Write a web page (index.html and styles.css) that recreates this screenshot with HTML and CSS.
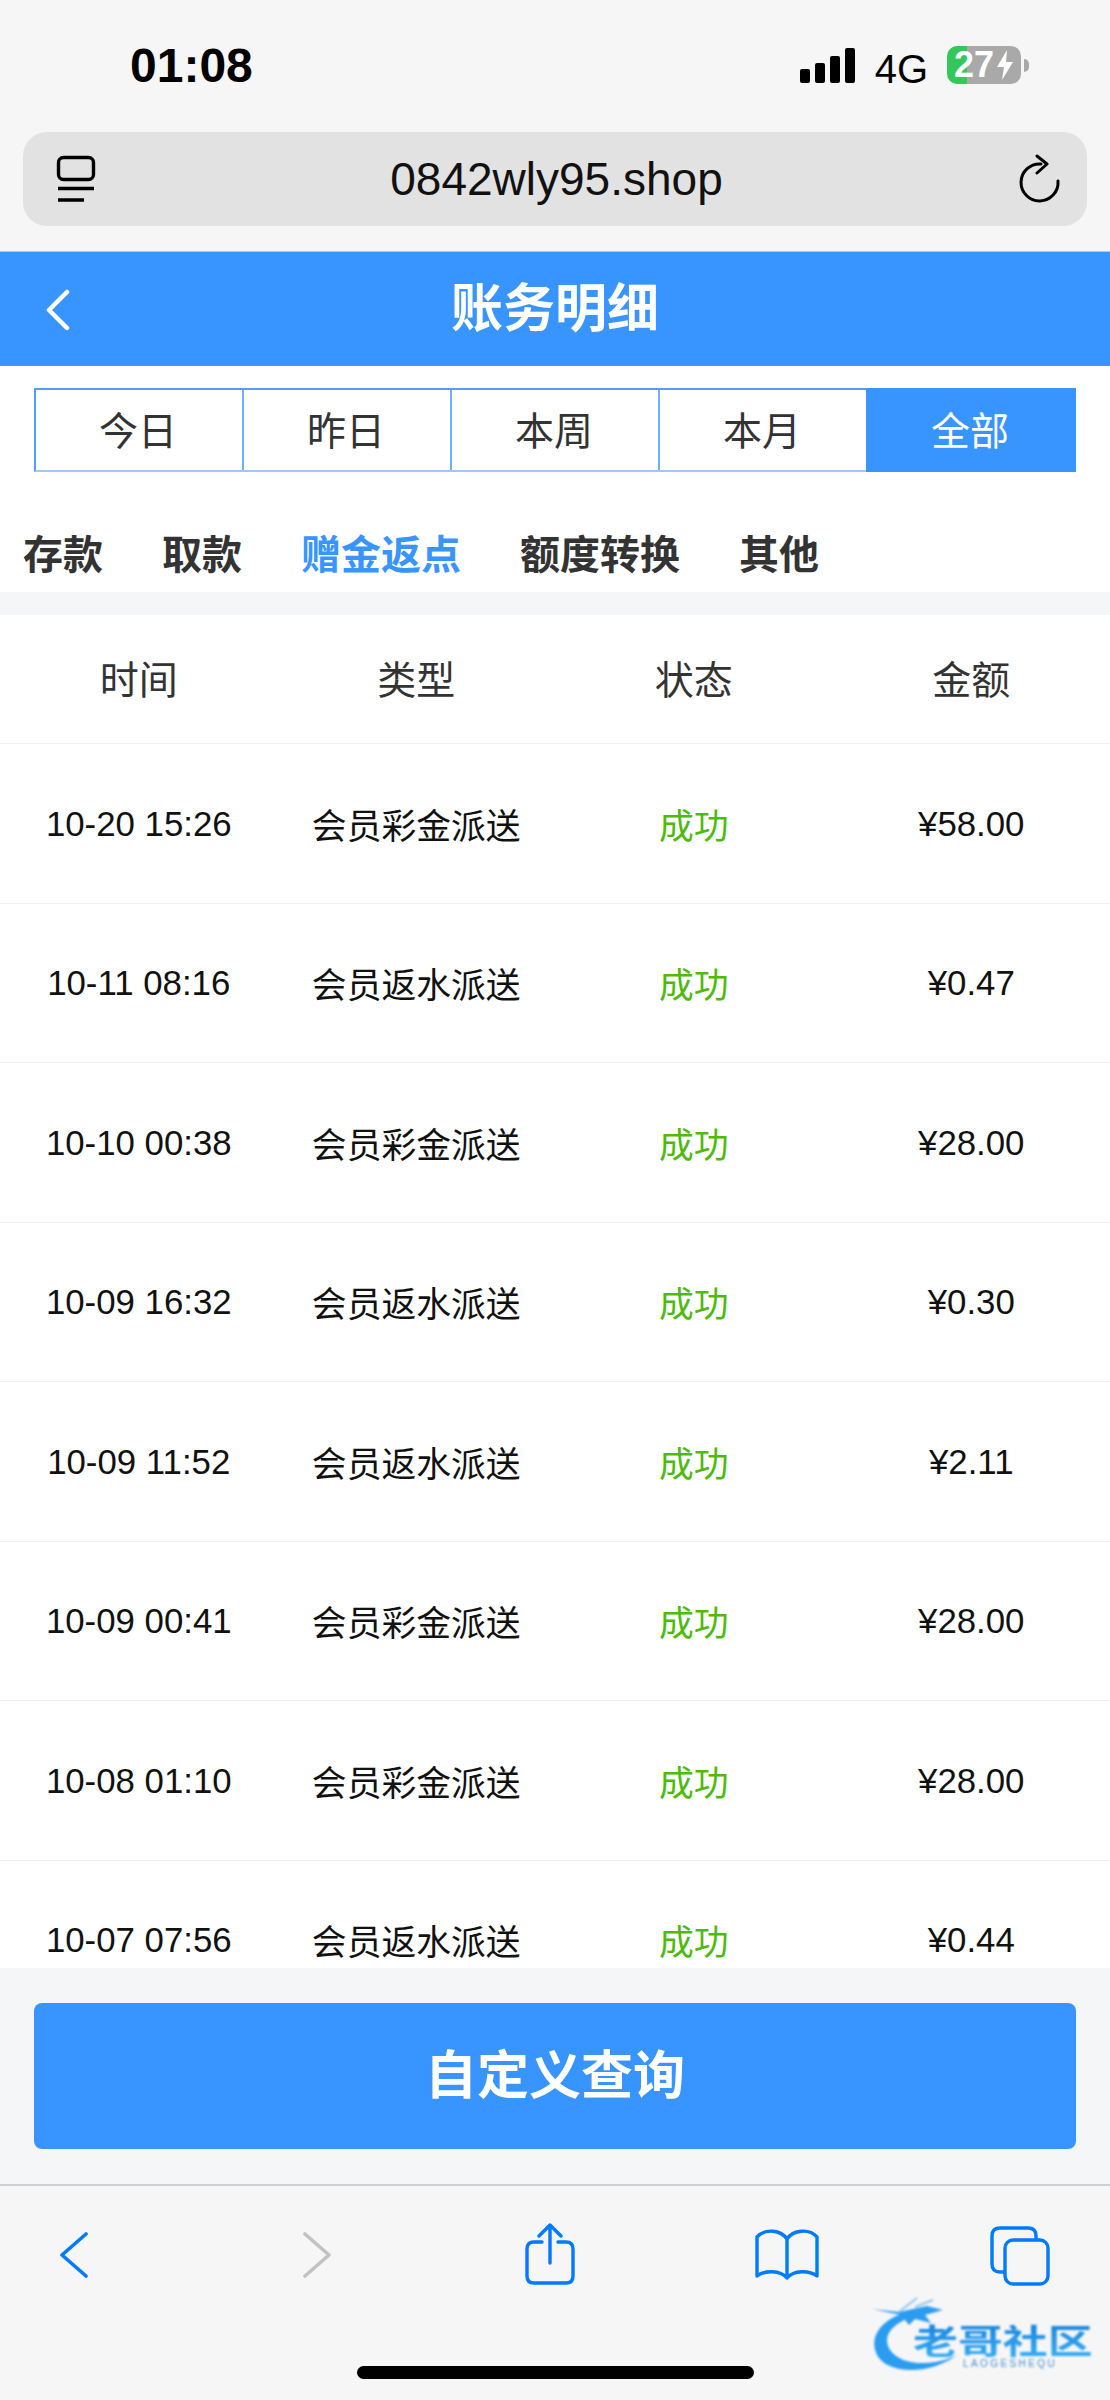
FILE: index.html
```html
<!DOCTYPE html>
<html lang="zh-CN">
<head>
    <meta charset="UTF-8">
    <meta name="viewport" content="width=device-width, initial-scale=1.0">
    <title>账务明细</title>
    <link rel="stylesheet" href="styles.css">
</head>
<body>
    <div class="browser-top">
        <div class="status-bar">
            <span class="clock">01:08</span>
            <div class="status-right">
                <div class="signal"><i class="bar1"></i><i class="bar2"></i><i class="bar3"></i><i class="bar4"></i></div>
                <span class="network">4G</span>
                <div class="battery">
                    <span class="battery-num">27</span>
                    <svg class="battery-bolt" width="18" height="30" viewBox="0 0 18 30"><path d="M11 0 L1 17 H8 L6 30 L17 12 H10 Z" fill="#fff"/></svg>
                </div>
                <i class="battery-nub"></i>
            </div>
        </div>
        <div class="url-bar">
            <svg class="url-icon" width="40" height="48" viewBox="0 0 40 48" fill="none" stroke="#000" stroke-width="3.4" stroke-linecap="round">
                <rect x="2.5" y="2.5" width="35" height="22" rx="5"/>
                <path d="M2 33.5 H38 M2 45 H28" stroke-linecap="butt"/>
            </svg>
            <span class="url-text">0842wly95.shop</span>
            <svg class="url-icon" width="42" height="50" viewBox="0 0 42 50" fill="none" stroke="#000" stroke-width="3" stroke-linecap="round" stroke-linejoin="round">
                <path d="M22 10 A18.5 18.5 0 1 0 39 27"/>
                <path d="M18 2 L28 10 L18 19"/>
            </svg>
        </div>
    </div>

    <header class="page-header">
        <svg class="back-arrow" width="26" height="42" viewBox="0 0 26 42" fill="none" stroke="#fff" stroke-width="4.5" stroke-linecap="round" stroke-linejoin="round"><path d="M22 3 L4 21 L22 39"/></svg>
        <h1>账务明细</h1>
    </header>

    <div class="range-tabs">
        <div class="range-tab">今日</div>
        <div class="range-tab">昨日</div>
        <div class="range-tab">本周</div>
        <div class="range-tab">本月</div>
        <div class="range-tab active">全部</div>
    </div>

    <nav class="type-tabs">
        <span>存款</span>
        <span>取款</span>
        <span class="active">赠金返点</span>
        <span>额度转换</span>
        <span>其他</span>
    </nav>

    <div class="list">
        <div class="row head">
            <div>时间</div><div>类型</div><div>状态</div><div>金额</div>
        </div>
        <div class="row">
            <div>10-20 15:26</div><div>会员彩金派送</div><div class="ok">成功</div><div>¥58.00</div>
        </div>
        <div class="row">
            <div>10-11 08:16</div><div>会员返水派送</div><div class="ok">成功</div><div>¥0.47</div>
        </div>
        <div class="row">
            <div>10-10 00:38</div><div>会员彩金派送</div><div class="ok">成功</div><div>¥28.00</div>
        </div>
        <div class="row">
            <div>10-09 16:32</div><div>会员返水派送</div><div class="ok">成功</div><div>¥0.30</div>
        </div>
        <div class="row">
            <div>10-09 11:52</div><div>会员返水派送</div><div class="ok">成功</div><div>¥2.11</div>
        </div>
        <div class="row">
            <div>10-09 00:41</div><div>会员彩金派送</div><div class="ok">成功</div><div>¥28.00</div>
        </div>
        <div class="row">
            <div>10-08 01:10</div><div>会员彩金派送</div><div class="ok">成功</div><div>¥28.00</div>
        </div>
        <div class="row">
            <div>10-07 07:56</div><div>会员返水派送</div><div class="ok">成功</div><div>¥0.44</div>
        </div>
    </div>

    <div class="query-bar">
        <button type="button" class="query-btn">自定义查询</button>
    </div>

    <div class="browser-bottom">
        <div class="toolbar">
            <svg class="tool-back" width="28" height="46" viewBox="0 0 28 46" fill="none" stroke="#007aff" stroke-width="3.6" stroke-linecap="round" stroke-linejoin="round"><path d="M26 2 L2 23 L26 44"/></svg>
            <svg class="tool-forward" width="28" height="46" viewBox="0 0 28 46" fill="none" stroke="#c2c2c2" stroke-width="3.6" stroke-linecap="round" stroke-linejoin="round"><path d="M2 2 L26 23 L2 44"/></svg>
            <svg class="tool-share" width="50" height="62" viewBox="0 0 50 62" fill="none" stroke="#007aff" stroke-width="3.4" stroke-linecap="round" stroke-linejoin="round">
                <path d="M25 2 V40 M14 13 L25 2 L36 13"/>
                <path d="M17 19 H9 Q2 19 2 26 V53 Q2 60 9 60 H41 Q48 60 48 53 V26 Q48 19 41 19 H33"/>
            </svg>
            <svg class="tool-book" width="64" height="52" viewBox="0 0 64 52" fill="none" stroke="#007aff" stroke-width="3.4" stroke-linecap="round" stroke-linejoin="round">
                <path d="M32 10 V49 M32 10 C26 1 10 -1 2 8 V47 C10 41 25 41 32 49 C39 41 54 41 62 47 V8 C54 -1 38 1 32 10 Z"/>
            </svg>
            <svg class="tool-tabs" width="60" height="60" viewBox="0 0 60 60" fill="none" stroke="#007aff" stroke-width="3.4" stroke-linejoin="round">
                <path d="M46 14 V10 Q46 2 38 2 H10 Q2 2 2 10 V38 Q2 46 10 46 H15"/>
                <rect x="15" y="14" width="43" height="44" rx="8"/>
            </svg>
        </div>
        <div class="home-indicator"></div>
    </div>

    <div class="watermark">
        <svg width="110" height="90" viewBox="0 0 110 90">
            <path d="M36 19 C14 27 4 44 12 60 C21 78 62 82 92 60 C68 72 36 71 25 55 C17 42 26 30 44 23 Z" fill="#2a9df0"/>
            <path d="M7 14 L34 17 L62 11 L78 15 L60 20 L66 28 L50 24 L44 30 L36 20 Z" fill="#2a9df0"/>
            <path d="M34 17 L52 3 M50 12 L68 5" stroke="#8cc8f2" stroke-width="2" fill="none"/>
        </svg>
        <span class="wm-name">老哥社区</span>
        <span class="wm-sub">LAOGESHEQU</span>
    </div>
</body>
</html>
```

FILE: styles.css
```css
* {
    box-sizing: border-box;
}
html, body {
    margin: 0;
    padding: 0;
}
body {
    position: relative;
    width: 1110px;
    height: 2400px;
    overflow: hidden;
    display: flex;
    flex-direction: column;
    background-color: #ffffff;
    font-family: "Liberation Sans", "Noto Sans CJK SC", sans-serif;
    color: #333;
}

/* safari chrome, top */
.browser-top {
    height: 252px;
    flex-shrink: 0;
    background-color: #f6f6f6;
    border-bottom: 1px solid #c4c4c4;
    padding: 0 23px;
}
.status-bar {
    height: 132px;
    display: flex;
    justify-content: space-between;
    padding: 42px 0 0 107px;
}
.clock {
    font-size: 48px;
    font-weight: bold;
    line-height: 48px;
    color: #000;
}
.status-right {
    display: flex;
    align-items: flex-start;
    padding-right: 58px;
}
.signal {
    display: flex;
    align-items: flex-end;
    gap: 5px;
    height: 35px;
    margin-top: 6px;
}
.signal i {
    display: block;
    width: 10px;
    background-color: #000;
    border-radius: 2px;
}
.signal .bar1 { height: 14px; }
.signal .bar2 { height: 20px; }
.signal .bar3 { height: 27px; }
.signal .bar4 { height: 35px; }
.network {
    font-size: 40px;
    line-height: 44px;
    margin: 5px 0 0 20px;
    color: #000;
}
.battery {
    position: relative;
    width: 74px;
    height: 38px;
    margin: 4px 0 0 19px;
    border-radius: 10px;
    background: linear-gradient(to right, #34c759 20px, #a9a9a9 20px);
    display: flex;
    align-items: center;
    padding-left: 7px;
    gap: 2px;
}
.battery-num {
    font-size: 36px;
    font-weight: bold;
    line-height: 38px;
    color: #fff;
}
.battery-nub {
    width: 5px;
    height: 13px;
    margin: 17px 0 0 3px;
    background-color: #a9a9a9;
    border-radius: 0 5px 5px 0;
}
.url-bar {
    height: 94px;
    background-color: #e2e2e2;
    border-radius: 24px;
    display: flex;
    align-items: center;
    justify-content: space-between;
    padding: 0 26px 0 33px;
}
.url-text {
    font-size: 46px;
    line-height: 50px;
    color: #111;
    margin-left: -2px;
}

/* page header */
.page-header {
    height: 114px;
    flex-shrink: 0;
    background-color: #3894ff;
    display: flex;
    align-items: center;
    justify-content: center;
    position: relative;
}
.page-header h1 {
    margin: 0;
    font-size: 52px;
    font-weight: 700;
    line-height: 60px;
    color: #fff;
}
.back-arrow {
    position: absolute;
    left: 45px;
    top: 37px;
}

.range-tabs {
    display: grid;
    grid-template-columns: repeat(5, 208px);
    flex-shrink: 0;
    height: 84px;
    margin: 22px 34px 0;
    border: 2px solid #4c9fff;
    border-bottom-color: #9cc9ff;
}
.range-tab {
    display: flex;
    align-items: center;
    justify-content: center;
    padding: 0 2px 4px 0;
    font-size: 39px;
    color: #333;
    border-right: 2px solid #6db0ff;
}
.range-tab.active {
    background-color: #3894ff;
    color: #fff;
    border-right: 0;
    margin: -2px 0 -2px -2px;
}

.type-tabs {
    display: flex;
    flex-shrink: 0;
    gap: 59px;
    height: 143px;
    padding: 56px 0 0 23px;
    border-bottom: 23px solid #f5f6f8;
    font-size: 40px;
    font-weight: 700;
    line-height: 54px;
    color: #333;
}
.type-tabs .active {
    color: #3894ff;
}

/* records */
.list {
    flex: 1;
    min-height: 0;
    overflow: hidden;
}
.row {
    display: grid;
    grid-template-columns: repeat(4, 1fr);
    align-items: center;
    height: 159.5px;
    padding-top: 1px;
    border-bottom: 1px solid #f0f0f0;
    text-align: center;
    font-size: 34.8px;
    color: #111;
}
.row.head {
    height: 129px;
    padding: 0 0 4px;
    font-size: 39px;
    color: #333;
}
.row .ok {
    color: #4cbb0a;
}

.query-bar {
    height: 216px;
    flex-shrink: 0;
    background-color: #f5f6f8;
    padding: 35px 34px 0;
}
.query-btn {
    display: block;
    width: 100%;
    height: 146px;
    padding: 0 0 10px;
    border: none;
    border-radius: 8px;
    background-color: #3894ff;
    color: #fff;
    font-family: inherit;
    font-size: 52px;
    font-weight: 700;
}

/* safari chrome, bottom */
.browser-bottom {
    height: 216px;
    flex-shrink: 0;
    background-color: #f6f6f6;
    border-top: 2px solid #cfcfcf;
    position: relative;
}
.toolbar {
    display: flex;
    align-items: flex-start;
    padding: 37px 0 0 60px;
}
.toolbar svg {
    flex-shrink: 0;
}
.tool-back { margin-top: 9px; }
.tool-forward { margin: 9px 0 0 215px; }
.tool-share { margin: 0 0 0 194px; }
.tool-book { margin: 6px 0 0 180px; }
.tool-tabs { margin: 3px 0 0 171px; }
.home-indicator {
    position: absolute;
    left: 357px;
    top: 180px;
    width: 397px;
    height: 13px;
    border-radius: 7px;
    background-color: #000;
}

/* site logo stamped over the corner */
.watermark {
    position: absolute;
    left: 865px;
    top: 2295px;
    width: 240px;
    height: 95px;
    filter: blur(1px);
}
.wm-name {
    position: absolute;
    left: 48px;
    top: 29px;
    width: 136px;
    font-size: 34px;
    font-weight: 700;
    line-height: 36px;
    white-space: nowrap;
    transform: scaleX(1.32);
    transform-origin: left center;
    background: linear-gradient(to bottom, #1684e0, #3bb0f5);
    -webkit-background-clip: text;
    background-clip: text;
    color: transparent;
}
.wm-sub {
    position: absolute;
    left: 98px;
    top: 63px;
    font-size: 10px;
    line-height: 12px;
    letter-spacing: 2.4px;
    color: #4a90d0;
}
```
